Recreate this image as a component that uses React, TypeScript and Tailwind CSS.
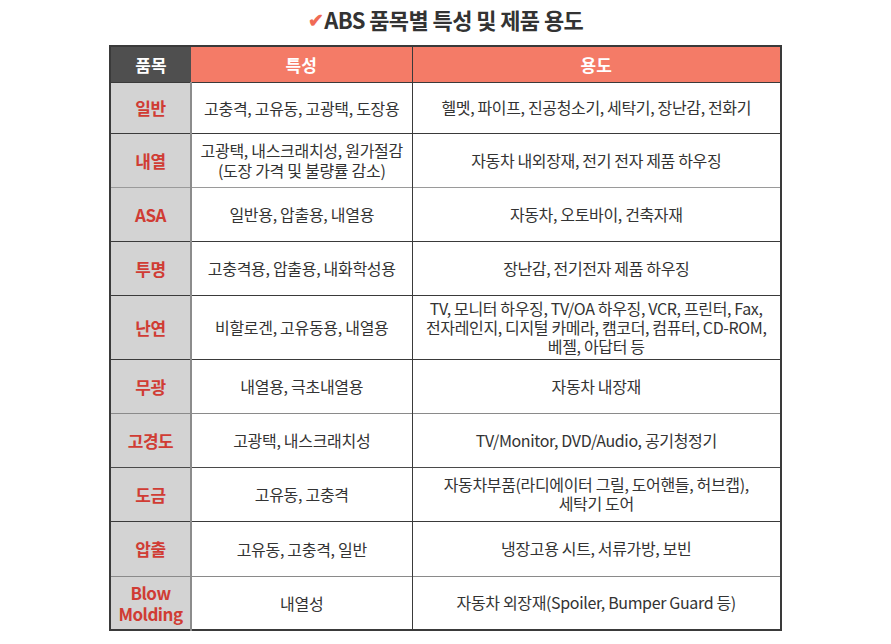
import React from "react";

type Row = {
  name: string[];
  feat: string[];
  use: string[];
  h: number;
  line: string;
};

// 행 높이와 구분선 색은 원본 표 그대로
const ROWS: Row[] = [
  { name: ["일반"], feat: ["고충격, 고유동, 고광택, 도장용"], use: ["헬멧, 파이프, 진공청소기, 세탁기, 장난감, 전화기"], h: 51, line: "border-[#3a3a3a]" },
  { name: ["내열"], feat: ["고광택, 내스크래치성, 원가절감", "(도장 가격 및 불량률 감소)"], use: ["자동차 내외장재, 전기 전자 제품 하우징"], h: 54, line: "border-[#9a9a9a]" },
  { name: ["ASA"], feat: ["일반용, 압출용, 내열용"], use: ["자동차, 오토바이, 건축자재"], h: 54, line: "border-[#3a3a3a]" },
  { name: ["투명"], feat: ["고충격용, 압출용, 내화학성용"], use: ["장난감, 전기전자 제품 하우징"], h: 54, line: "border-[#3a3a3a]" },
  {
    name: ["난연"],
    feat: ["비할로겐, 고유동용, 내열용"],
    use: ["TV, 모니터 하우징, TV/OA 하우징, VCR, 프린터, Fax,", "전자레인지, 디지털 카메라, 캠코더, 컴퓨터, CD-ROM,", "베젤, 아답터 등"],
    h: 64,
    line: "border-[#3a3a3a]",
  },
  { name: ["무광"], feat: ["내열용, 극초내열용"], use: ["자동차 내장재"], h: 54, line: "border-[#8a8a8a]" },
  { name: ["고경도"], feat: ["고광택, 내스크래치성"], use: ["TV/Monitor, DVD/Audio, 공기청정기"], h: 54, line: "border-[#4a4a4a]" },
  { name: ["도금"], feat: ["고유동, 고충격"], use: ["자동차부품(라디에이터 그릴, 도어핸들, 허브캡),", "세탁기 도어"], h: 54, line: "border-[#3a3a3a]" },
  { name: ["압출"], feat: ["고유동, 고충격, 일반"], use: ["냉장고용 시트, 서류가방, 보빈"], h: 55, line: "border-[#8a8a8a]" },
  { name: ["Blow", "Molding"], feat: ["내열성"], use: ["자동차 외장재(Spoiler, Bumper Guard 등)"], h: 54, line: "border-[#3a3a3a]" },
];

function Lines({ items }: { items: string[] }) {
  return (
    <>
      {items.map((t, i) => (
        <div key={i}>{t}</div>
      ))}
    </>
  );
}

export default function App() {
  return (
    <div
      className="h-[644px] w-[891px] bg-white text-[#333]"
      style={{ fontFamily: '"Noto Sans CJK KR", "Noto Sans", sans-serif' }}
    >
      <h1 className="flex h-[45px] items-center justify-center pb-[6px] text-[22px] font-bold tracking-[-0.6px] text-[#333]">
        <span className="mr-[1px] text-[19px] text-[#f06a55]">✔</span>
        ABS 품목별 특성 및 제품 용도
      </h1>

      <div className="ml-[109px] w-[673px]">
        <table className="w-full table-fixed border-collapse border-2 border-[#3a3a3a] text-center">
          <colgroup>
            <col className="w-[81px]" />
            <col className="w-[221px]" />
            <col />
          </colgroup>
          <thead>
            <tr className="h-[36px] text-[17px] font-bold text-white">
              <th className="bg-[#4f4f4f] p-0">품목</th>
              <th className="border-r border-[#3a3a3a] bg-[#f47b67] p-0">특성</th>
              <th className="bg-[#f47b67] p-0">용도</th>
            </tr>
          </thead>
          <tbody>
            {ROWS.map((r, i) => (
              <tr
                key={r.name.join()}
                className={`border-t ${i === 0 ? "border-[#3a3a3a]" : ROWS[i - 1].line}`}
                style={{ height: r.h }}
              >
                <td className="border-r-2 border-[#8c8c8c] bg-[#d3d3d3] p-0 text-[17px] font-bold leading-[21px] tracking-[-0.5px] text-[#d03c34]">
                  <Lines items={r.name} />
                </td>
                <td className="border-r border-[#3a3a3a] p-0 text-[16px] leading-[20px] tracking-[-0.3px]">
                  <Lines items={r.feat} />
                </td>
                <td className="p-0 text-[16px] leading-[19px] tracking-[-0.35px]">
                  <Lines items={r.use} />
                </td>
              </tr>
            ))}
          </tbody>
        </table>
      </div>
    </div>
  );
}
